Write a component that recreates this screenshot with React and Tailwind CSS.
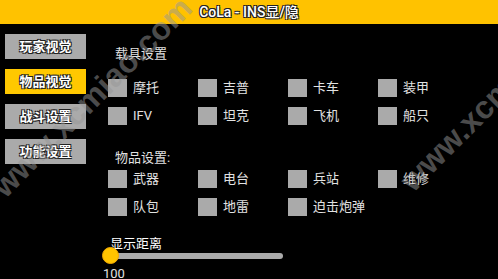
import React from 'react';

const outline = '[text-shadow:-1px_-1px_0_#222,1px_-1px_0_#222,-1px_1px_0_#222,1px_1px_0_#222]';

const tabs = ['玩家视觉', '物品视觉', '战斗设置', '功能设置'];
const vehicles = ['摩托', '吉普', '卡车', '装甲', 'IFV', '坦克', '飞机', '船只'];
const items = ['武器', '电台', '兵站', '维修', '队包', '地雷', '迫击炮弹'];

const CheckGrid = ({ labels }) => (
  <div className="ml-[5px] grid grid-cols-[90px_90px_90px_90px] gap-y-[10px]">
    {labels.map(label => (
      <div key={label} className="flex items-center h-[18px]">
        <div className="w-[19px] h-[18px] bg-[#aaaaaa] shrink-0" />
        <span className="ml-[6px] text-[13px] leading-[16px] text-[#e2e2e2]">{label}</span>
      </div>
    ))}
  </div>
);

export default function App() {
  return (
    <div
      className="relative w-[498px] h-[279px] bg-black overflow-hidden"
      style={{ fontFamily: 'Roboto, "Noto Sans CJK SC", sans-serif' }}
    >
      <div className="h-[24px] bg-[#ffc200] flex items-center justify-center">
        <span className={`text-[14px] leading-[16px] font-medium text-white ${outline}`}>CoLa - INS显/隐</span>
      </div>

      <div className="flex">
        <div className="w-[86px] pl-[5px] pt-[10px] flex flex-col gap-[10px] shrink-0">
          {tabs.map((t, i) => (
            <div
              key={t}
              className={`w-[81px] h-[25px] flex items-center justify-center text-[13px] font-bold text-white ${outline} ${
                i === 1 ? 'bg-[#ffc800]' : 'bg-[#aaaaaa]'
              }`}
            >
              {t}
            </div>
          ))}
        </div>

        <div className="ml-[17px] pt-[22px] flex flex-col">
          <div className="ml-[12px] text-[13px] leading-[16px] text-[#e2e2e2]">载具设置</div>
          <div className="mt-[17px]">
            <CheckGrid labels={vehicles} />
          </div>
          <div className="ml-[12px] mt-[25px] text-[13px] leading-[16px] text-[#e2e2e2]">物品设置:</div>
          <div className="mt-[4px]">
            <CheckGrid labels={items} />
          </div>
          <div className="ml-[7px] mt-[20px] text-[13px] leading-[16px] text-white">显示距离</div>
          <div className="relative mt-[1px] w-[180px] h-[6px] rounded-full bg-[#aaaaaa]">
            <div className="absolute left-[-1px] top-[-6px] w-[17px] h-[17px] rounded-full bg-[#ffc400] border border-[#f0a800]" />
          </div>
          <div className="mt-[7px] text-[13px] leading-[16px] text-[#e2e2e2]">100</div>
        </div>
      </div>

      <span className="absolute left-[8px] top-[172px] origin-bottom-left -rotate-45 text-[32px] leading-[30px] font-bold whitespace-nowrap text-[rgba(150,150,150,0.5)] pointer-events-none" style={{ fontFamily: '"Liberation Sans", Arial, sans-serif' }}>
        www.xcmiao.com
      </span>
      <span className="absolute left-[416px] top-[166px] origin-bottom-left -rotate-45 text-[32px] leading-[30px] font-bold whitespace-nowrap text-[rgba(150,150,150,0.5)] pointer-events-none" style={{ fontFamily: '"Liberation Sans", Arial, sans-serif' }}>
        www.xcmiao.com
      </span>
    </div>
  );
}
